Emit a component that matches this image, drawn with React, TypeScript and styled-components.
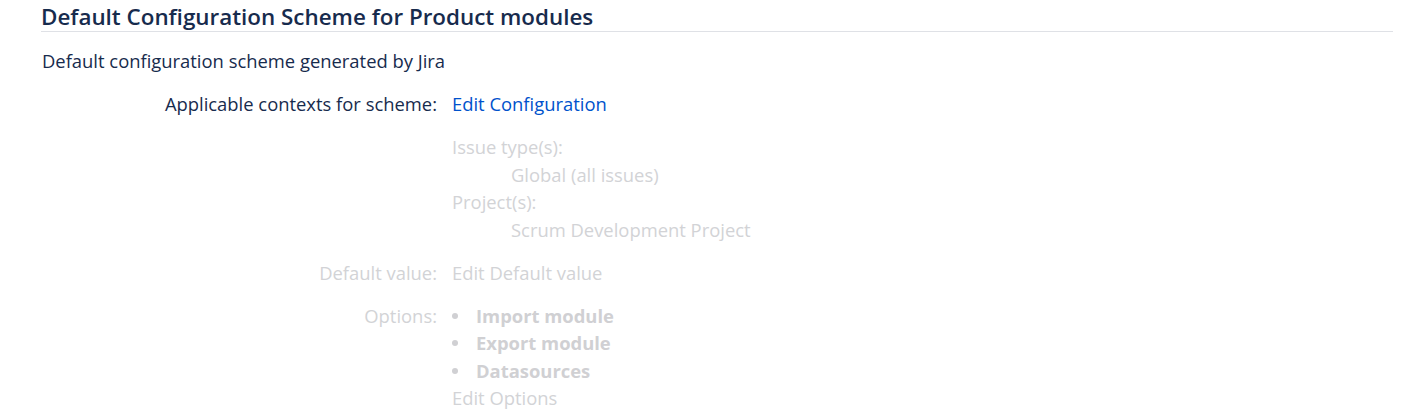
import styled, { createGlobalStyle } from "styled-components";

const GlobalStyle = createGlobalStyle`
  html, body {
    margin: 0;
    padding: 0;
    background: #ffffff;
  }
  body {
    font-family: "Open Sans", "Noto Sans", sans-serif;
    color: #172b4d;
  }
`;

const Page = styled.div`
  padding: 3px 11px 0 41px;
`;

const Title = styled.h2`
  margin: 0;
  padding-bottom: 1px;
  font-size: 22.4px;
  font-weight: 600;
  line-height: 27px;
  color: #172b4d;
  border-bottom: 1px solid #dfe1e6;
`;

const Description = styled.p`
  margin: 15px 0 0 1px;
  font-size: 18.4px;
  line-height: 28px;
`;

const Table = styled.div`
  display: grid;
  grid-template-columns: 396px 1fr;
  column-gap: 15px;
  row-gap: 15.5px;
  margin-top: 15px;
  font-size: 18.4px;
  line-height: 27.5px;
`;

const Label = styled.div<{ $muted?: boolean }>`
  text-align: right;
  color: ${({ $muted }) => ($muted ? "#d2d3d6" : "#172b4d")};
`;

const Value = styled.div<{ $muted?: boolean }>`
  color: ${({ $muted }) => ($muted ? "#d2d3d6" : "#172b4d")};
`;

const Link = styled.a<{ $muted?: boolean }>`
  color: ${({ $muted }) => ($muted ? "#d2d3d6" : "#0052cc")};
  text-decoration: none;
  cursor: pointer;
`;

const Contexts = styled.div`
  grid-column: 2;
  color: #d2d3d6;
`;

const Indented = styled.div`
  padding-left: 59px;
`;

const OptionList = styled.ul`
  margin: 0;
  padding-left: 24px;
  list-style: none;
`;

const OptionItem = styled.li`
  font-weight: 700;
  color: #d0d0d3;
  &::before {
    content: "";
    display: inline-block;
    width: 6px;
    height: 6px;
    margin: 0 18px 0 -24px;
    border-radius: 50%;
    background: #d0d0d3;
    vertical-align: 4px;
  }
`;

export default function App() {
  return (
    <>
      <GlobalStyle />
      <Page>
        <Title>Default Configuration Scheme for Product modules</Title>
        <Description>Default configuration scheme generated by Jira</Description>
        <Table>
          <Label>Applicable contexts for scheme:</Label>
          <Value>
            <Link>Edit Configuration</Link>
          </Value>
          <Contexts>
            <div>Issue type(s):</div>
            <Indented>Global (all issues)</Indented>
            <div>Project(s):</div>
            <Indented>Scrum Development Project</Indented>
          </Contexts>
          <Label $muted>Default value:</Label>
          <Value $muted>
            <Link $muted>Edit Default value</Link>
          </Value>
          <Label $muted>Options:</Label>
          <Value $muted>
            <OptionList>
              <OptionItem>Import module</OptionItem>
              <OptionItem>Export module</OptionItem>
              <OptionItem>Datasources</OptionItem>
            </OptionList>
            <Link $muted>Edit Options</Link>
          </Value>
        </Table>
      </Page>
    </>
  );
}
